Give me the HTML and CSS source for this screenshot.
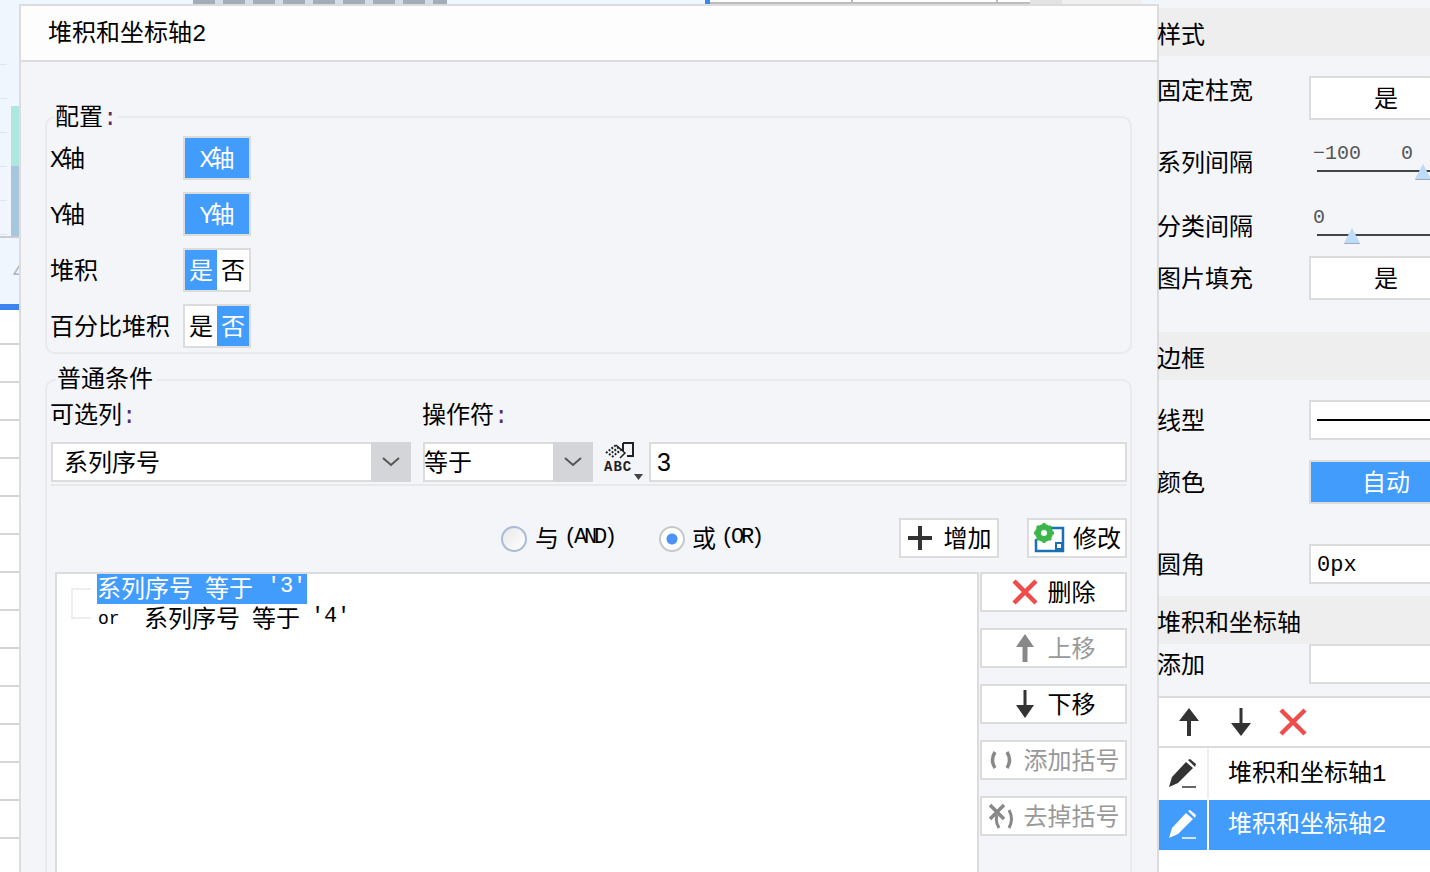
FILE: index.html
```html
<!DOCTYPE html>
<html lang="zh-CN">
<head>
  <meta charset="UTF-8" />
  <meta name="viewport" content="width=device-width, initial-scale=1.0" />
  <title>堆积和坐标轴2</title>
  <link rel="stylesheet" href="styles.css">
</head>
<body>
  <div class="workspace">
    <div class="topbar">
      <div class="top-title"></div>
      <div class="top-tab"></div>
      <div class="top-ruler"><i></i><i></i></div>
      <div class="top-grey"></div>
      <div class="top-pale"></div>
    </div>
    <div class="work-row">
      <div class="strip">
        <div class="strip-chart">
          <div class="strip-ticks"></div>
          <div class="strip-bars">
            <div class="bar-teal"></div>
            <div class="bar-blue"></div>
          </div>
        </div>
        <div class="strip-axis"><span class="strip-num">4</span></div>
        <div class="strip-tab"></div>
        <div class="strip-table"></div>
      </div>

      <div class="dialog">
        <div class="dialog-title">堆积和坐标轴<span class="latin">2</span></div>
        <div class="dialog-body">

          <div class="group group-config">
            <div class="legend">配置<span class="latin colon">:</span></div>
            <div class="cfg-row">
              <span class="cfg-label"><span class="latin">X</span>轴</span>
              <div class="toggle on"><span class="latin">X</span>轴</div>
            </div>
            <div class="cfg-row">
              <span class="cfg-label"><span class="latin">Y</span>轴</span>
              <div class="toggle on"><span class="latin">Y</span>轴</div>
            </div>
            <div class="cfg-row">
              <span class="cfg-label">堆积</span>
              <div class="seg"><span class="on">是</span><span>否</span></div>
            </div>
            <div class="cfg-row">
              <span class="cfg-label">百分比堆积</span>
              <div class="seg"><span>是</span><span class="on">否</span></div>
            </div>
          </div>

          <div class="group group-cond">
            <div class="legend">普通条件</div>
            <div class="cond-labels">
              <span class="col-label">可选列<span class="latin colon">:</span></span>
              <span>操作符<span class="latin colon">:</span></span>
            </div>
            <div class="cond-fields">
              <div class="select select-col">
                <span class="select-text">系列序号</span>
                <span class="select-arrow">
                  <svg width="18" height="10" viewBox="0 0 18 10"><path d="M1 1l8 7 8-7" fill="none" stroke="#555" stroke-width="2"/></svg>
                </span>
              </div>
              <div class="select select-op">
                <span class="select-text">等于</span>
                <span class="select-arrow">
                  <svg width="18" height="10" viewBox="0 0 18 10"><path d="M1 1l8 7 8-7" fill="none" stroke="#555" stroke-width="2"/></svg>
                </span>
              </div>
              <div class="abc-btn">
                <svg class="abc-flag" width="30" height="17" viewBox="0 0 30 17">
                  <path d="M18 1h10v13h-6M18 1v8" fill="none" stroke="#222" stroke-width="2"/>
                  <path d="M1 11l10-8M4 13l10-8M7 15l10-8" stroke="#222" stroke-width="2" stroke-dasharray="2 1.500" fill="none"/>
                  <path d="M11 3l9 8-5 5" fill="none" stroke="#222" stroke-width="1.500"/>
                </svg>
                <span class="abc-text">ABC</span>
                <svg class="abc-arrow" width="10" height="6" viewBox="0 0 10 6"><path d="M0 0h9l-4.500 6z" fill="#444"/></svg>
              </div>
              <div class="value-input"><span class="value-num">3</span></div>
            </div>

            <div class="cond-actions">
              <span class="radio"></span>
              <span class="radio-text">与</span><span class="latin radio-latin">(AND)</span>
              <span class="radio checked"></span>
              <span class="radio-text">或</span><span class="latin radio-latin">(OR)</span>
              <div class="action-btns">
                <div class="btn btn-add">
                  <svg width="26" height="26" viewBox="0 0 26 26"><path d="M13 1v24M1 13h24" stroke="#333" stroke-width="4"/></svg>
                  <span class="btn-text">增加</span>
                </div>
                <div class="btn btn-edit">
                  <svg width="32" height="30" viewBox="0 0 32 30">
                    <path d="M10 5h20v23H3V16" fill="none" stroke="#1a6fb5" stroke-width="2.500"/>
                    <rect x="23" y="20" width="6" height="6" fill="#fff" stroke="#1a6fb5" stroke-width="2"/>
                    <circle cx="11" cy="10" r="6.500" fill="none" stroke="#3cb54a" stroke-width="5"/>
                    <path d="M11 0v20M1 10h20M4 3l14 14M18 3L4 17" stroke="#3cb54a" stroke-width="3"/>
                    <circle cx="11" cy="10" r="3" fill="#fff"/>
                  </svg>
                  <span class="btn-text">修改</span>
                </div>
              </div>
            </div>

            <div class="cond-list-row">
              <div class="cond-list">
                <div class="tree-line"></div>
                <div class="cond-item"><span class="cond-sel">系列序号<span class="cond-op">等于</span><span class="latin cond-val">'3'</span></span></div>
                <div class="cond-item"><span class="latin cond-or">or</span>系列序号<span class="cond-op">等于</span><span class="latin cond-val">'4'</span></div>
              </div>
              <div class="side-btns">
                <div class="side-btn">
                  <svg width="26" height="26" viewBox="0 0 26 26"><path d="M2 2l22 22M24 2L2 24" stroke="#ef4c4c" stroke-width="4.500"/></svg>
                  <span class="btn-text">删除</span>
                </div>
                <div class="side-btn off">
                  <svg width="26" height="28" viewBox="0 0 26 28"><path d="M13 0l9 13h-6.500v15h-5V13H4z" fill="#888"/></svg>
                  <span class="btn-text">上移</span>
                </div>
                <div class="side-btn">
                  <svg width="26" height="28" viewBox="0 0 26 28"><path d="M13 28l9-13h-7.500V0h-3v15H4z" fill="#333"/></svg>
                  <span class="btn-text">下移</span>
                </div>
                <div class="side-btn off">
                  <svg width="26" height="20" viewBox="0 0 26 20"><path d="M7 2Q2 10 7 18M19 2q5 8 0 16" fill="none" stroke="#888" stroke-width="3.500"/></svg>
                  <span class="btn-text">添加括号</span>
                </div>
                <div class="side-btn off">
                  <svg width="26" height="26" viewBox="0 0 26 26"><path d="M2 2l14 14M16 2L2 16" stroke="#888" stroke-width="3.500"/><path d="M9 12q-2 7 2 13M21 7q5 9 0 18" fill="none" stroke="#888" stroke-width="3"/></svg>
                  <span class="btn-text">去掉括号</span>
                </div>
              </div>
            </div>
          </div>

        </div>
      </div>
    </div>
  </div>

  <div class="panel">
    <div class="panel-head">样式</div>

    <div class="prop prop-first">
      <span class="prop-label">固定柱宽</span>
      <div class="prop-box tall center">是</div>
    </div>
    <div class="prop prop-slider">
      <span class="prop-label">系列间隔</span>
      <div class="slider">
        <div class="slider-nums"><span>−100</span><span class="slider-max">0</span></div>
        <div class="slider-track"><span class="thumb thumb-end"></span></div>
      </div>
    </div>
    <div class="prop prop-slider2">
      <span class="prop-label">分类间隔</span>
      <div class="slider">
        <div class="slider-nums"><span>0</span></div>
        <div class="slider-track"><span class="thumb thumb-start"></span></div>
      </div>
    </div>
    <div class="prop prop-fill">
      <span class="prop-label">图片填充</span>
      <div class="prop-box tall center">是</div>
    </div>

    <div class="panel-head head-border">边框</div>
    <div class="prop prop-line">
      <span class="prop-label">线型</span>
      <div class="prop-box"><div class="line-sample"></div></div>
    </div>
    <div class="prop prop-color">
      <span class="prop-label">颜色</span>
      <div class="prop-box tall center blue">自动</div>
    </div>
    <div class="prop prop-radius">
      <span class="prop-label">圆角</span>
      <div class="prop-box"><span class="radius-val">0px</span></div>
    </div>

    <div class="panel-head head-axis">堆积和坐标轴</div>
    <div class="prop prop-add">
      <span class="prop-label">添加</span>
      <div class="prop-box"></div>
    </div>

    <div class="axis-list">
      <div class="axis-tools">
        <svg width="22" height="28" viewBox="0 0 22 28"><path d="M11 0l10 13h-8v15H9V13H1z" fill="#333"/></svg>
        <svg width="22" height="28" viewBox="0 0 22 28"><path d="M11 28l10-13h-8.500V0h-3v15H1z" fill="#333"/></svg>
        <svg width="28" height="28" viewBox="0 0 28 28"><path d="M2 2l24 24M26 2L2 26" stroke="#ef4c4c" stroke-width="4.500"/></svg>
      </div>
      <div class="axis-row">
        <span class="axis-icon">
          <svg width="30" height="30" viewBox="0 0 30 30"><path d="M1 28l3-10L18 3l7 6-15 15z" fill="#333"/><path d="M20 1l2-1 6 5-1 3z" fill="#333"/><path d="M14 28h14" stroke="#333" stroke-width="1.500"/></svg>
        </span>
        <span class="axis-name">堆积和坐标轴<span class="latin">1</span></span>
      </div>
      <div class="axis-row active">
        <span class="axis-icon">
          <svg width="30" height="30" viewBox="0 0 30 30"><path d="M1 28l3-10L18 3l7 6-15 15z" fill="#fff"/><path d="M20 1l2-1 6 5-1 3z" fill="#fff"/><path d="M14 28h14" stroke="#fff" stroke-width="1.500"/></svg>
        </span>
        <span class="axis-name">堆积和坐标轴<span class="latin">2</span></span>
      </div>
    </div>
  </div>
</body>
</html>
```

FILE: styles.css
```css
html, body {
  margin: 0;
  padding: 0;
  height: 872px;
  overflow: hidden;
}
body {
  display: flex;
  width: 1430px;
  background-color: #f4f5f8;
  color: #000;
  font-family: "Noto Sans CJK SC", "Liberation Sans", sans-serif;
  font-size: 24px;
  line-height: 30px;
}
svg {
  display: block;
  flex: none;
}
.latin {
  font-family: "Liberation Mono", monospace;
  font-size: 24px;
  letter-spacing: -3.400px;
  line-height: 1;
}
.colon {
  color: #5b2d6b;
}

/* page behind the dialog */
.workspace {
  width: 1159px;
  height: 872px;
  flex: none;
  display: flex;
  flex-direction: column;
  overflow: hidden;
}
.topbar {
  height: 4px;
  flex: none;
  display: flex;
  background-color: #eff6fe;
  overflow: hidden;
}
.top-title {
  width: 254px;
  margin-left: 193px;
  background: repeating-linear-gradient(90deg, #a3adb9 0 22px, #d5dce5 22px 30px);
  filter: blur(0.6px);
}
.top-tab {
  width: 5px;
  margin-left: 258px;
  background-color: #3d85ee;
}
.top-ruler {
  width: 320px;
  display: flex;
  background-color: #fff;
  border-bottom: 2px solid #bdbdbd;
  box-sizing: border-box;
}
.top-ruler i {
  width: 2px;
  background-color: #bdbdbd;
  margin-left: 141px;
}
.top-ruler i + i {
  margin-left: 143px;
}
.top-grey {
  width: 32px;
  background-color: #e3e3e3;
}
.top-pale {
  width: 80px;
  background-color: #f0f0f0;
}
.work-row {
  flex: 1;
  display: flex;
  min-height: 0;
}
.strip {
  width: 19px;
  flex: none;
  background-color: #eff6fe;
  display: flex;
  flex-direction: column;
}
.strip-chart {
  display: flex;
  height: 232px;
  flex: none;
}
.strip-ticks {
  width: 7px;
  margin-top: 60px;
  margin-right: 4px;
  background: repeating-linear-gradient(180deg, #dfe6ee 0 1px, transparent 1px 34px);
}
.strip-bars {
  width: 8px;
  margin-top: 102px;
}
.bar-teal {
  height: 60px;
  background-color: #aee6e0;
}
.bar-blue {
  height: 70px;
  background-color: #a8c6de;
}
.strip-axis {
  height: 66px;
  flex: none;
  border-top: 2px solid #c8cdd2;
  overflow: hidden;
}
.strip-num {
  display: block;
  margin: 18px 0 0 13px;
  color: #b0b6bd;
  font-size: 20px;
}
.strip-tab {
  height: 6px;
  flex: none;
  background-color: #3d85ee;
}
.strip-table {
  flex: 1;
  background: repeating-linear-gradient(180deg, #fff 0 33px, #d5d5d5 33px 35px, #fff 35px 38px);
}

/* dialog */
.dialog {
  width: 1140px;
  height: 900px;
  flex: none;
  box-sizing: border-box;
  border: 2px solid #dcdcdc;
  background-color: #f4f5f8;
  overflow: hidden;
}
.dialog-title {
  height: 54px;
  line-height: 50px;
  padding-left: 27px;
  background-color: #fdfdfd;
  border-bottom: 2px solid #dcdcdc;
}
.dialog-body {
  padding: 54px 0 0 24px;
}
.group {
  position: relative;
  width: 1087px;
  box-sizing: border-box;
  border: 2px solid #eaeaec;
  border-radius: 10px;
  padding-left: 3px;
}
.legend {
  position: absolute;
  top: -18px;
  left: 8px;
  padding-right: 4px;
  background-color: #f4f5f8;
}
.group-cond .legend {
  top: -19px;
  left: 9px;
  padding-left: 1px;
}
.group-config {
  padding-top: 18px;
  padding-bottom: 4px;
}
.cfg-row {
  display: flex;
  align-items: center;
  height: 44px;
  margin-bottom: 12px;
}
.cfg-row:last-child {
  margin-bottom: 0;
}
.cfg-label {
  width: 133px;
  padding-bottom: 2px;
}
.toggle, .seg {
  width: 68px;
  height: 44px;
  box-sizing: border-box;
  border: 2px solid #dcdcdc;
  background-color: #fff;
  text-align: center;
  line-height: 38px;
}
.toggle.on {
  background-color: #429cfb;
  color: #fff;
}
.seg {
  display: flex;
}
.seg span {
  width: 32px;
}
.seg .on {
  background-color: #429cfb;
  color: #fff;
}

/* conditions */
.group-cond {
  margin-top: 25px;
  height: 560px;
}
.cond-labels {
  display: flex;
  height: 30px;
  margin-top: 18px;
  line-height: 28px;
}
.col-label {
  width: 372px;
}
.cond-fields {
  display: flex;
  width: 1076px;
  margin-left: 1px;
  margin-top: 13px;
  padding-bottom: 2px;
  border-bottom: 2px solid #e8e8ea;
}
.select {
  display: flex;
  height: 40px;
  box-sizing: border-box;
  border: 2px solid #dcdcdc;
  background-color: #fff;
}
.select-col {
  width: 360px;
  margin-right: 12px;
}
.select-col .select-text {
  padding-left: 11px;
  text-indent: 0;
}
.select-op {
  width: 170px;
}
.select-text {
  flex: 1;
  line-height: 34px;
  text-indent: -1px;
}
.select-arrow {
  width: 40px;
  margin: -2px -2px -2px 0;
  background-color: #d4d5d9;
  display: flex;
  align-items: center;
  justify-content: center;
}
.abc-btn {
  position: relative;
  width: 40px;
  height: 40px;
  margin-left: 11px;
  margin-right: 5px;
}
.abc-flag {
  margin-left: 1px;
}
.abc-text {
  display: block;
  margin-top: 2px;
  font-family: "Liberation Mono", monospace;
  font-size: 14px;
  font-weight: bold;
  line-height: 13px;
  letter-spacing: 1px;
  color: #222;
}
.abc-arrow {
  position: absolute;
  right: 0;
  bottom: 2px;
}
.value-input {
  width: 478px;
  height: 40px;
  box-sizing: border-box;
  border: 2px solid #dcdcdc;
  background-color: #fff;
  padding-left: 6px;
  line-height: 34px;
}
.value-num {
  font-family: "Liberation Sans", sans-serif;
  font-size: 25px;
}
.cond-actions {
  display: flex;
  align-items: center;
  width: 1076px;
  height: 40px;
  margin-left: 1px;
  margin-top: 32px;
}
.radio {
  width: 26px;
  height: 26px;
  box-sizing: border-box;
  border: 2px solid #a9bcd6;
  border-radius: 50%;
  background: linear-gradient(135deg, #e8e8e8, #fff);
  margin-left: 450px;
  margin-right: 8px;
  margin-top: 2px;
  flex: none;
}
.radio.checked {
  margin-left: 45px;
  margin-right: 7px;
  border-color: #c8c8c8;
  background: radial-gradient(circle, #4b94f5 0 5px, #fff 6px);
}
.radio-text {
  padding-bottom: 2px;
}
.radio-latin {
  margin-left: 5px;
  font-size: 22px;
  letter-spacing: -3.200px;
}
.action-btns {
  display: flex;
  gap: 28px;
  margin-left: auto;
}
.btn {
  display: flex;
  align-items: center;
  justify-content: center;
  gap: 11px;
  width: 100px;
  height: 40px;
  box-sizing: border-box;
  border: 2px solid #dcdcdc;
  background-color: #fff;
}
.btn-edit {
  gap: 8px;
}
.btn-text {
  margin-bottom: 3px;
}
.cond-list-row {
  display: flex;
  margin-top: 14px;
  margin-left: 5px;
}
.cond-list {
  position: relative;
  width: 924px;
  height: 320px;
  box-sizing: border-box;
  border: 2px solid #dcdcdc;
  border-bottom: none;
  background-color: #fff;
  padding-left: 40px;
}
.tree-line {
  position: absolute;
  left: 14px;
  top: 14px;
  width: 20px;
  height: 31px;
  box-sizing: border-box;
  border: 2px solid #eeeeee;
  border-right: none;
}
.cond-item {
  display: flex;
  height: 30px;
  line-height: 26px;
  white-space: nowrap;
}
.cond-sel {
  display: flex;
  width: 210px;
  background-color: #429cfb;
  color: #fff;
}
.cond-op {
  margin-left: 12px;
}
.cond-val {
  margin-left: 14px;
  font-size: 22px;
  letter-spacing: -0.200px;
  line-height: 26px;
}
.cond-or ~ .cond-val {
  margin-left: 11px;
}
.cond-or {
  width: 47px;
  padding-left: 1px;
  box-sizing: border-box;
  font-size: 18px;
  letter-spacing: 0;
  line-height: 30px;
}
.side-btns {
  display: flex;
  flex-direction: column;
  gap: 16px;
  width: 147px;
  margin-left: 1px;
}
.side-btn {
  display: flex;
  align-items: center;
  justify-content: center;
  gap: 10px;
  height: 40px;
  box-sizing: border-box;
  border: 2px solid #dcdcdc;
  background-color: #fff;
}
.side-btn.off {
  color: #999;
}

/* right property panel */
.panel {
  flex: 1;
  min-width: 0;
  padding-top: 8px;
  display: flex;
  flex-direction: column;
}
.panel-head {
  height: 48px;
  flex: none;
  line-height: 50px;
  text-indent: -2px;
  background-color: #eeeeee;
  white-space: nowrap;
}
.head-border {
  margin-top: 32px;
}
.head-axis {
  margin-top: 12px;
}
.prop {
  display: flex;
  align-items: center;
  flex: none;
}
.prop-label {
  width: 152px;
  margin-left: -2px;
  padding-bottom: 2px;
  flex: none;
}
.prop-box {
  width: 154px;
  height: 40px;
  flex: none;
  box-sizing: border-box;
  border: 2px solid #dcdcdc;
  background-color: #fff;
}
.prop-box.tall {
  height: 44px;
}
.prop-box.center {
  text-align: center;
  line-height: 38px;
}
.prop-box.blue {
  background-color: #429cfb;
  color: #fff;
}
.prop-first {
  margin-top: 20px;
}
.prop-first .prop-label {
  margin-top: -16px;
}
.prop-slider {
  margin-top: 20px;
  height: 40px;
}
.prop-slider2 {
  margin-top: 24px;
  height: 40px;
}
.prop-slider .prop-label, .prop-slider2 .prop-label {
  margin-top: 4px;
}
.slider {
  width: 154px;
  height: 40px;
  flex: none;
  padding-left: 4px;
  box-sizing: border-box;
}
.slider-nums {
  display: flex;
  height: 24px;
  line-height: 28px;
  font-family: "Liberation Mono", monospace;
  font-size: 20px;
  color: #555;
}
.slider-max {
  margin-left: 40px;
}
.slider-track {
  position: relative;
  width: 160px;
  height: 2px;
  margin: 6px 0 0 4px;
  background-color: #444;
}
.thumb {
  position: absolute;
  top: -6px;
  width: 0;
  height: 0;
  border-left: 8px solid transparent;
  border-right: 8px solid transparent;
  border-bottom: 15px solid #bcdcfa;
  filter: drop-shadow(0 1px 0 #a0aab5);
}
.thumb-end {
  left: 98px;
}
.thumb-start {
  left: 27px;
}
.prop-fill {
  margin-top: 12px;
}
.prop-line {
  margin-top: 20px;
}
.line-sample {
  height: 2px;
  margin: 17px 0 0 6px;
  background-color: #000;
}
.prop-color {
  margin-top: 20px;
}
.prop-radius {
  margin-top: 40px;
}
.radius-val {
  margin-left: 6px;
  font-family: "Liberation Mono", monospace;
  font-size: 22px;
  line-height: 36px;
}
.axis-list {
  flex: 1;
  margin-top: 12px;
  background-color: #fff;
  border-top: 2px solid #dcdcdc;
}
.axis-tools {
  display: flex;
  align-items: center;
  gap: 30px;
  height: 48px;
  padding-left: 19px;
  border-bottom: 2px solid #dcdcdc;
}
.axis-tools svg:last-child {
  margin-left: -3px;
}
.axis-row {
  display: flex;
  height: 50px;
  margin-top: 1px;
  margin-bottom: 1px;
}
.axis-icon {
  width: 48px;
  display: flex;
  align-items: center;
  justify-content: center;
  border-right: 2px solid #eeeeee;
  flex: none;
}
.axis-name {
  padding-left: 19px;
  line-height: 44px;
  flex: 1;
  white-space: nowrap;
}
.axis-row.active {
  color: #fff;
  background-color: #429cfb;
}
.axis-row.active .axis-icon {
  border-right-color: #fff;
}
```
